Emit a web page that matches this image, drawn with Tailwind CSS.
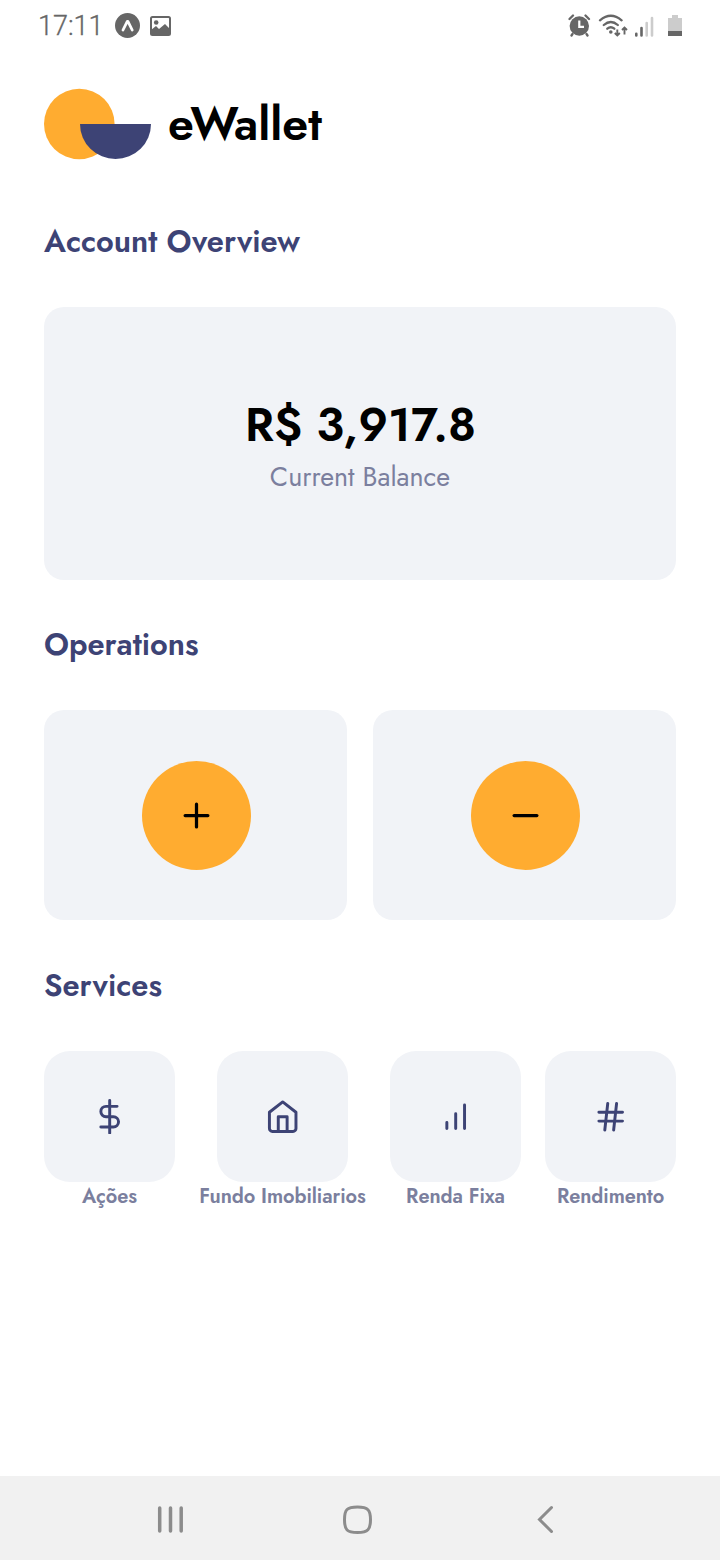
<!DOCTYPE html>
<html lang="en">
<head>
<meta charset="utf-8">
<title>eWallet</title>
<script src="https://cdn.jsdelivr.net/npm/@tailwindcss/browser@4"></script>
</head>
<body class="w-[720px] h-[1560px] bg-white overflow-hidden font-['Jost',Lato,sans-serif]">
<div class="flex flex-col h-full">
  <header class="flex items-center h-[52px] pl-[38px] pr-9 text-[#666]">
    <span class="font-[Roboto,sans-serif] font-light text-[27px] leading-none [-webkit-text-stroke:0.3px_#666]">17:11</span>
    <svg class="ml-[11px] -mt-px" width="25" height="25" viewBox="0 0 25 25"><circle cx="12.5" cy="12.5" r="12.5" fill="#666"/><path d="M8 17l4.300-8.700h.6L17.200 17" fill="none" stroke="#fff" stroke-width="2.800" stroke-linecap="round" stroke-linejoin="round"/></svg>
    <svg class="ml-2.5 -mt-px" width="21" height="20" viewBox="0 0 21 20"><rect x="1" y="1" width="19" height="18" rx="1.500" fill="none" stroke="#666" stroke-width="2"/><circle cx="6.200" cy="6.500" r="2.300" fill="#666"/><path d="M1 14l5-4 3 3 6-5 5 5v6H1z" fill="#666"/></svg>
    <svg class="ml-auto" width="116" height="24" viewBox="0 0 116 24">
      <g fill="none" stroke="#666" stroke-width="2.300" stroke-linecap="round"><path d="M1.500 5l3.500-3.500M17.500 1.500l3.500 3.500M4.500 20l-1 1.500M18.500 20l1 1.500"/></g>
      <circle cx="11.300" cy="12" r="9.700" fill="#666"/><path d="M11.300 6.500v6.300h4.700" fill="none" stroke="#fff" stroke-width="2.200"/>
      <g fill="none" stroke="#666" stroke-width="2.300" stroke-linecap="round"><path d="M32 6.300q10.800-9 21.600 0M35.800 11q7-6 14 0M39.300 14.700q3.500-3 7 0"/></g>
      <circle cx="42.800" cy="18" r="1.800" fill="#666"/>
      <path d="M49.300 15.500v6M46.800 19l2.500 2.500 2.500-2.500M56.500 20.500v-7M54 16l2.500-2.500 2.500 2.500" fill="none" stroke="#666" stroke-width="1.900"/>
      <g stroke-width="2.600" stroke-linecap="round"><path d="M68.300 19.700v1.800M73.500 14v7.500" stroke="#666"/><path d="M78.700 9v12.500M84 4v17.500" stroke="#ccc"/></g>
      <path d="M104 1h6v3h4v13h-14V4h4z" fill="#ccc"/><path d="M100 17h14v5h-14z" fill="#666"/>
    </svg>
  </header>
  <main class="flex flex-col flex-1 px-11 text-[#3d4375]">
    <div class="flex items-center mt-9 h-[72px] text-black">
      <svg width="107" height="72" viewBox="0 0 107 72"><circle cx="35.300" cy="36" r="35.300" fill="#ffac30"/><path d="M36 36h71a35.500 35 0 0 1-71 0z" fill="#3d4375"/></svg>
      <span class="ml-[17px] text-[46.6px] leading-none font-semibold whitespace-nowrap">eWallet</span>
    </div>
    <h2 class="mt-[60px] h-11 leading-[44px] text-[30.8px] font-semibold">Account Overview</h2>
    <section class="mt-[43px] h-[273px] rounded-[20px] bg-[#f1f3f7] flex flex-col items-center">
      <p class="mt-[90px] ml-px h-14 leading-[56px] text-[46.6px] font-semibold text-black whitespace-nowrap">R$ 3,917.8</p>
      <p class="mt-[6px] h-9 leading-9 text-[26.8px] text-[#7b7f9e]">Current Balance</p>
    </section>
    <h2 class="mt-[43px] h-11 leading-[44px] text-[30.8px] font-semibold">Operations</h2>
    <section class="mt-[43px] grid grid-cols-2 gap-[26px] h-[210px] text-black">
      <div class="rounded-[20px] bg-[#f1f3f7] flex items-center justify-center">
        <div class="size-[109px] rounded-full bg-[#ffac30] flex items-center justify-center ml-px">
          <svg class="size-[39px]" viewBox="0 0 24 24" fill="none" stroke="currentColor" stroke-width="2" stroke-linecap="round"><path d="M12 5v14M5 12h14"/></svg>
        </div>
      </div>
      <div class="rounded-[20px] bg-[#f1f3f7] flex items-center justify-center">
        <div class="size-[109px] rounded-full bg-[#ffac30] flex items-center justify-center ml-px">
          <svg class="size-[39px]" viewBox="0 0 24 24" fill="none" stroke="currentColor" stroke-width="2" stroke-linecap="round"><path d="M5 12h14"/></svg>
        </div>
      </div>
    </section>
    <h2 class="mt-[44px] h-11 leading-[44px] text-[30.8px] font-semibold">Services</h2>
    <section class="mt-[43px] flex justify-between">
      <div class="w-[131px] flex flex-col items-center">
        <div class="size-[131px] rounded-[26px] bg-[#f1f3f7] flex items-center justify-center">
          <svg class="size-[35.4px]" viewBox="0 0 24 24" fill="none" stroke="currentColor" stroke-width="2" stroke-linecap="round" stroke-linejoin="round"><path d="M12 1v22M17 5H9.500a3.500 3.500 0 0 0 0 7h5a3.500 3.500 0 0 1 0 7H6"/></svg>
        </div>
        <span class="mt-px h-7 leading-7 text-[20px] tracking-[-0.08px] font-semibold text-[#7b7f9e]">Ações</span>
      </div>
      <div class="w-[167px] flex flex-col items-center">
        <div class="size-[131px] rounded-[26px] bg-[#f1f3f7] flex items-center justify-center">
          <svg class="size-[35.4px]" viewBox="0 0 24 24" fill="none" stroke="currentColor" stroke-width="2" stroke-linecap="round" stroke-linejoin="round"><path d="M3 9l9-7 9 7v11a2 2 0 0 1-2 2H5a2 2 0 0 1-2-2zM9 22V12h6v10"/></svg>
        </div>
        <span class="mt-px h-7 leading-7 text-[20px] tracking-[-0.08px] font-semibold text-[#7b7f9e] whitespace-nowrap">Fundo Imobiliarios</span>
      </div>
      <div class="w-[131px] flex flex-col items-center">
        <div class="size-[131px] rounded-[26px] bg-[#f1f3f7] flex items-center justify-center">
          <svg class="size-[35.4px]" viewBox="0 0 24 24" fill="none" stroke="currentColor" stroke-width="2" stroke-linecap="round"><path d="M12 20V10M18 20V4M6 20v-4"/></svg>
        </div>
        <span class="mt-px h-7 leading-7 text-[20px] tracking-[-0.08px] font-semibold text-[#7b7f9e]">Renda Fixa</span>
      </div>
      <div class="w-[131px] flex flex-col items-center">
        <div class="size-[131px] rounded-[26px] bg-[#f1f3f7] flex items-center justify-center">
          <svg class="size-[35.4px]" viewBox="0 0 24 24" fill="none" stroke="currentColor" stroke-width="2" stroke-linecap="round"><path d="M4 9h16M4 15h16M10 3L8 21M16 3l-2 18"/></svg>
        </div>
        <span class="mt-px h-7 leading-7 text-[20px] tracking-[-0.08px] font-semibold text-[#7b7f9e]">Rendimento</span>
      </div>
    </section>
  </main>
  <nav class="h-[84px] bg-[#f1f1f1]">
    <svg width="720" height="84" viewBox="0 0 720 84" fill="none" stroke="#8c8c8c" stroke-linecap="round"><path d="M159.700 32v23M170.500 32v23M181.200 32v23" stroke-width="3.500"/><path d="M357.500 31C368 31 370.500 34 370.500 43.700S368 56.500 357.500 56.500 344.500 54 344.500 43.700 347 31 357.500 31z" stroke-width="3"/><path d="M551.500 31.500L539.500 43.500 551.500 55.500" stroke-width="3"/></svg>
  </nav>
</div>
</body>
</html>
